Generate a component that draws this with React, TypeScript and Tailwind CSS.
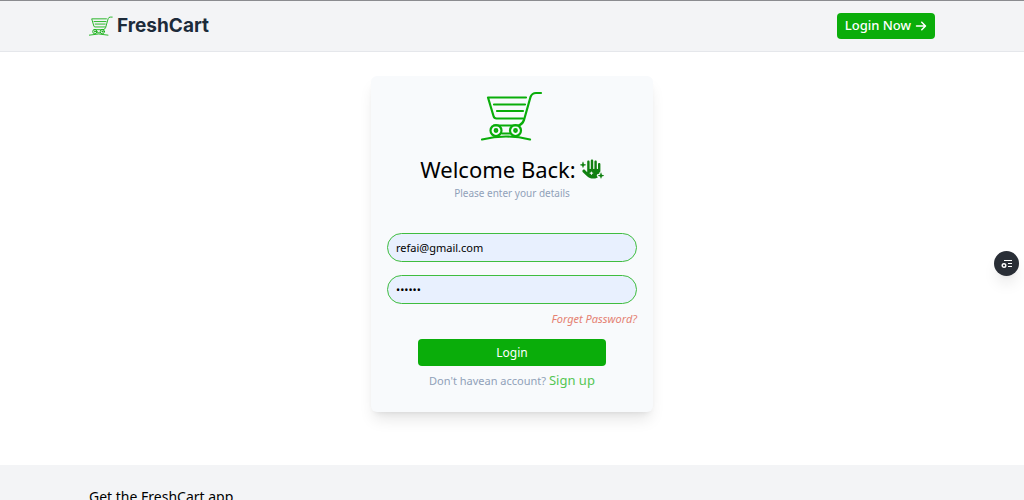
import React, { useState } from 'react';
import { FaArrowRight, FaHandSparkles } from 'react-icons/fa6';

const CartLogo: React.FC<{ className?: string }> = ({ className }) => (
  <svg
    viewBox="0 0 62 50"
    fill="none"
    stroke="currentColor"
    strokeWidth="2.200"
    strokeLinecap="round"
    strokeLinejoin="round"
    className={className}
    aria-hidden="true"
  >
    <path d="M60 2h-5q-4 0-5.500 4L43 29q-1.500 4-5 5.500" />
    <path d="M45 6.500H7l5.500 18.500q.7 2.500 3 2.500H42" />
    <path d="M13 13.500h31M16 20h26" />
    <path d="M13 34.500h25" />
    <circle cx="15" cy="39.500" r="5.500" />
    <circle cx="34.500" cy="39.500" r="5.500" />
    <circle cx="15" cy="39.500" r="1.300" />
    <circle cx="34.500" cy="39.500" r="1.300" />
    <path d="M1 48.500q24-6 48 0M21 42.500h8" />
  </svg>
);

const Header: React.FC = () => (
  <header className="border-t border-t-[#8b8c90] border-b border-b-gray-200 bg-gray-100">
    <div className="mx-auto flex h-[50px] w-5/6 max-w-[846px] items-center justify-between">
      <a href="#" className="flex items-center gap-1 text-[#1c2b3a]">
        <CartLogo className="h-5 w-6 text-[#0aad0a]" />
        <span className="font-['Inter',sans-serif] text-[19px] leading-6 font-bold">FreshCart</span>
      </a>
      <button className="flex h-[26px] items-center gap-1 rounded-sm bg-[#0aad0a] px-2 text-[13px] font-medium text-white">
        Login Now
        <FaArrowRight className="h-3 w-3" />
      </button>
    </div>
  </header>
);

const LoginCard: React.FC = () => {
  const [email, setEmail] = useState('refai@gmail.com');
  const [password, setPassword] = useState('secret');

  const inputClass =
    'block h-[29px] w-full rounded-full border border-[#3fbd3f] bg-[#e8f0fe] px-2 text-[11px] text-black outline-none';

  return (
    <div className="flex w-[282px] flex-col items-center rounded-md bg-slate-50 px-4 pt-[15px] pb-[21px] shadow-lg">
      <CartLogo className="h-[50px] w-[62px] text-[#0aad0a]" />
      <h1 className="mt-3 flex items-center gap-1 text-[22px] leading-8 whitespace-nowrap text-black">
        Welcome Back:
        <FaHandSparkles className="h-6 w-6 text-[#108010]" />
      </h1>
      <p className="text-[10px] leading-4 text-slate-400">Please enter your details</p>

      <form className="mt-8 w-full" onSubmit={(e) => e.preventDefault()}>
        <input
          type="email"
          aria-label="Email"
          value={email}
          onChange={(e) => setEmail(e.target.value)}
          className={inputClass}
        />
        <input
          type="password"
          aria-label="Password"
          value={password}
          onChange={(e) => setPassword(e.target.value)}
          className={`${inputClass} mt-[13px]`}
        />
        <div className="mt-[7px] flex justify-end text-[11px] leading-4">
          <a href="#" className="text-[#e58172] italic">Forget Password?</a>
        </div>
        <button type="submit" className="mx-auto mt-3 block h-[27px] w-3/4 rounded-sm bg-[#0aad0a] text-[12px] text-white">
          Login
        </button>
      </form>
      <p className="mt-1 text-[11px] leading-5 whitespace-nowrap text-slate-400">
        Don't havean account?{' '}
        <a href="#" className="text-[13px] text-[#54c654]">Sign up</a>
      </p>
    </div>
  );
};

export default function App() {
  return (
    <div className="h-screen overflow-hidden bg-white font-['Noto_Sans',sans-serif]">
      <Header />
      <main className="flex justify-center pt-6 pb-[53px]">
        <LoginCard />
      </main>
      <footer className="bg-gray-100 pt-5 pb-8">
        <div className="mx-auto w-5/6 max-w-[846px]">
          <h2 className="text-[14px] leading-6 text-black">Get the FreshCart app</h2>
        </div>
      </footer>
      <button
        aria-label="Open options"
        className="fixed top-[251px] right-[5px] flex h-[25px] w-[25px] items-center justify-center rounded-full bg-[#292e36] text-white shadow-lg"
      >
        <svg viewBox="0 0 12 10" className="h-[10px] w-3" fill="none" stroke="currentColor">
          <path d="M3 1.500h8M7 4.500h4M7 7.500h4" />
          <circle cx="3" cy="6.500" r="1.800" strokeWidth="1.400" />
        </svg>
      </button>
    </div>
  );
}
